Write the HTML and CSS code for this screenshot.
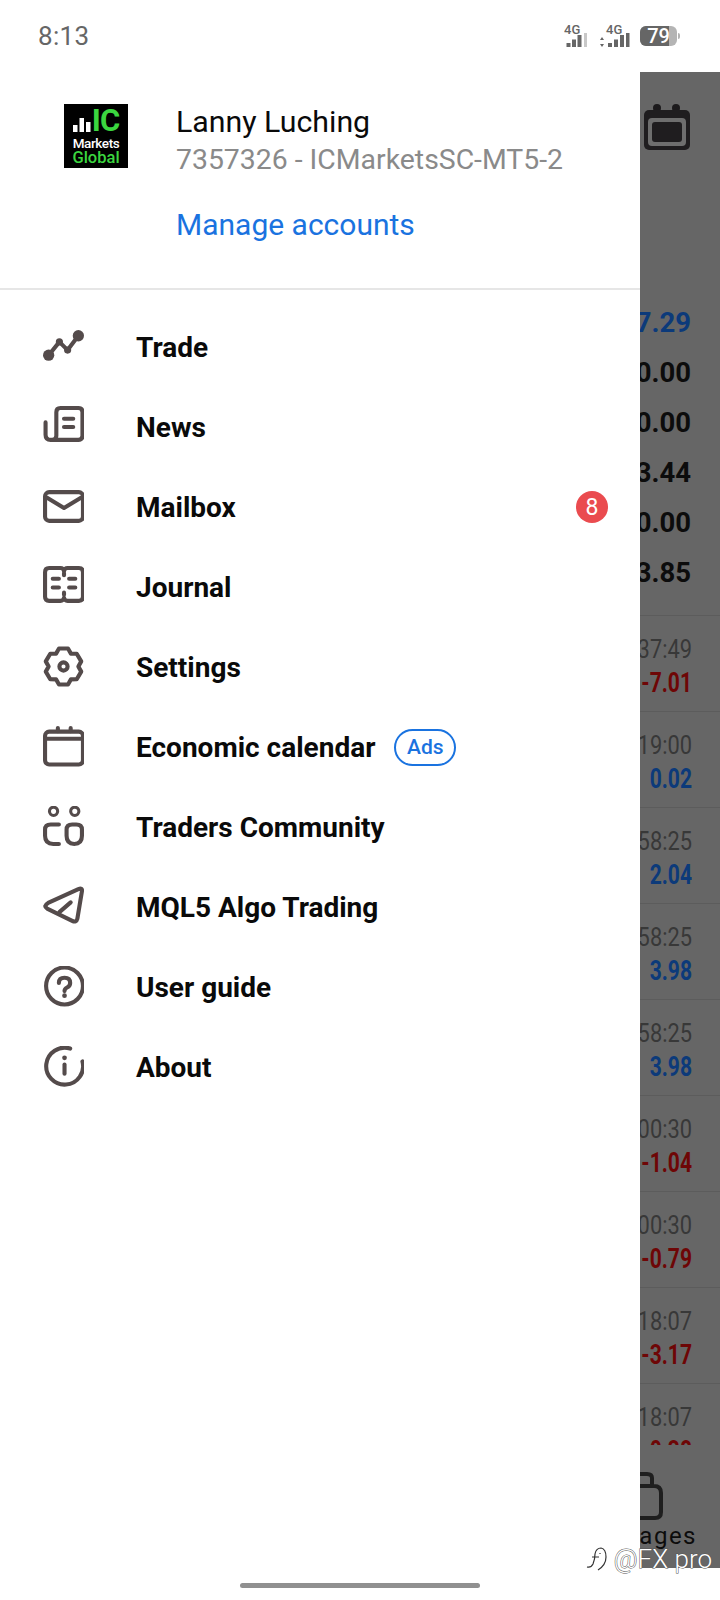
FILE: index.html
```html
<!DOCTYPE html>
<html lang="en">
<head>
<meta charset="utf-8">
<title>Accounts menu</title>
<link rel="stylesheet" href="styles.css">
</head>
<body>
<div class="screen">
  <header class="status">
    <span class="clock">8:13</span>
    <div class="status-icons">
      <svg class="signal" width="26" height="27" viewBox="0 -3 26 27">
        <text x="0" y="10" class="net">4G</text>
        <g fill="#666"><rect x="2.500" y="19" width="4" height="4"/><rect x="8" y="15.500" width="4" height="7.500"/><rect x="13.500" y="11" width="4" height="12"/></g>
        <rect x="20" y="9" width="3" height="14" fill="#c8c8c8"/>
      </svg>
      <svg class="signal" width="30" height="27" viewBox="0 -3 30 27">
        <text x="6" y="10" class="net">4G</text>
        <path d="M2 13l2 3H0zM2 23l-2-3h4z" fill="#666"/>
        <g fill="#666"><rect x="8" y="19" width="4" height="4"/><rect x="14" y="15.500" width="4" height="7.500"/><rect x="20" y="11" width="4" height="12"/><rect x="26" y="9" width="3.500" height="14"/></g>
      </svg>
      <div class="battery-wrap">
        <div class="battery"><div class="battery-level"></div><span class="battery-text">79</span></div>
        <div class="battery-nub"></div>
      </div>
    </div>
  </header>

  <div class="stage">
    <nav class="drawer">
      <section class="account">
        <div class="logo">
          <div class="logo-top">
            <svg class="logo-bars" width="19" height="14" viewBox="0 0 19 14"><g fill="#fff"><rect x="0" y="7" width="4.500" height="7"/><rect x="6.500" y="0" width="4.500" height="14"/><rect x="13" y="4" width="4.500" height="10"/></g></svg>
            <span class="logo-ic">IC</span>
          </div>
          <span class="logo-markets">Markets</span>
          <span class="logo-global">Global</span>
        </div>
        <div class="account-info">
          <div class="account-name">Lanny Luching</div>
          <div class="account-id">7357326 - ICMarketsSC-MT5-2</div>
          <a class="manage">Manage accounts</a>
        </div>
      </section>

      <ul class="menu">
        <li class="item">
          <svg class="icon" viewBox="0 0 40 40"><path d="M5.500 28.500L16 15.500l8 8L34.500 9.500" class="thin"/><circle cx="5.500" cy="28.500" r="5.500" class="solid"/><circle cx="16" cy="15.500" r="3.500" class="solid"/><circle cx="24" cy="23.500" r="3.500" class="solid"/><circle cx="34.500" cy="9.500" r="5.500" class="solid"/></svg>
          <span class="label">Trade</span>
        </li>
        <li class="item">
          <svg class="icon" viewBox="0 0 40 40"><path d="M2.500 16v12q0 5 5 5h27q4 0 4-4V6q0-4-4-4H17q-4 0-4 4v23q0 4-4 4" class="line"/><path d="M20.500 12.500h9M20.500 20.500h9" class="line"/></svg>
          <span class="label">News</span>
        </li>
        <li class="item">
          <svg class="icon" viewBox="0 0 40 40"><rect x="2" y="6" width="37" height="28" rx="4" class="line"/><path d="M4 11.500l16.500 10L37 11.500" class="line"/></svg>
          <span class="label">Mailbox</span>
          <span class="badge">8</span>
        </li>
        <li class="item">
          <svg class="icon" viewBox="0 0 40 40"><path d="M6 2h11q3 0 3.500 3 .5-3 3.500-3h11q4 0 4 4v24q0 4-4 4H24q-3 0-3.500-3-.5 3-3.500 3H6q-4 0-4-4V6q0-4 4-4z" class="line"/><path d="M20.500 7v2M20.500 26v2" class="line"/><path d="M9.500 12.500h6M25.500 12.500h6M9.500 21h6M25.500 21h6" class="line"/></svg>
          <span class="label">Journal</span>
        </li>
        <li class="item">
          <svg class="icon" viewBox="0 0 40 40"><path d="M15.600 2.500h8.800l2.850 4.940 5.650.06 4.400 7.500L34.500 20l2.800 5-4.400 7.500-5.650.06-2.850 4.940h-8.800l-2.850-4.940-5.650-.06L2.700 25l2.800-5-2.800-5 4.400-7.500 5.650-.06z" class="line"/><circle cx="20" cy="20" r="4" class="line"/></svg>
          <span class="label">Settings</span>
        </li>
        <li class="item">
          <svg class="icon" viewBox="0 0 40 40"><rect x="2" y="5.500" width="37" height="32" rx="4" class="line"/><path d="M3 12.500h35" class="line"/><path d="M14.500 2v3M27 2v3" class="line"/></svg>
          <span class="label">Economic calendar</span>
          <span class="ads">Ads</span>
        </li>
        <li class="item">
          <svg class="icon" viewBox="0 0 40 40"><circle cx="10.300" cy="5.200" r="4" class="thin-line"/><circle cx="31" cy="5.200" r="4" class="thin-line"/><path d="M15.500 18H7.500q-5.500 0-5.500 5v6q0 8 8 8h5.500" class="line"/><path d="M28.500 18h4q5.500 0 5.500 5v6q0 8-7.500 8T23 29v-6q0-5 5.500-5z" class="line"/></svg>
          <span class="label">Traders Community</span>
        </li>
        <li class="item">
          <svg class="icon" viewBox="0 0 40 40"><path d="M5 16.500L34.500 3q4-1.500 3.500 2L33.500 32q-1 4-5 2L4 22q-4-2.500 1-5.500z" class="line"/><path d="M16 25.500L27 16" class="line"/></svg>
          <span class="label">MQL5 Algo Trading</span>
        </li>
        <li class="item">
          <svg class="icon" viewBox="0 0 40 40"><circle cx="21" cy="19.500" r="18" class="line"/><path d="M15.500 16.500q0-5 5.500-5t5.500 5q0 3-3 4.500-2.500 1.300-2.500 3.500" class="line"/><circle cx="21" cy="29" r="2.300" class="solid"/></svg>
          <span class="label">User guide</span>
        </li>
        <li class="item">
          <svg class="icon" viewBox="0 0 40 40"><path d="M38.500 15A18 18 0 1 1 26.500 2.500" class="line"/><path d="M21 18v9" class="line"/><circle cx="21" cy="11.500" r="2.300" class="solid"/></svg>
          <span class="label">About</span>
        </li>
      </ul>
    </nav>

    <aside class="scrim">
      <svg class="toolbar-icon" viewBox="0 0 48 48"><circle cx="13" cy="4" r="4" fill="#1c1a1c"/><circle cx="32" cy="4" r="4" fill="#1c1a1c"/><rect x="0" y="6" width="46" height="40" rx="5" fill="#1f1d1f"/><rect x="4" y="14" width="38" height="28" rx="4" fill="#6e6e6e"/><rect x="8" y="18" width="30" height="20" rx="3" fill="#1f1d1f"/></svg>

      <div class="totals">
        <div class="total blue">7.29</div>
        <div class="total">0.00</div>
        <div class="total">0.00</div>
        <div class="total">3.44</div>
        <div class="total">0.00</div>
        <div class="total">3.85</div>
      </div>

      <div class="deal"><div class="deal-time">37:49</div><div class="deal-sum red">-7.01</div></div>
      <div class="deal"><div class="deal-time">19:00</div><div class="deal-sum blue">0.02</div></div>
      <div class="deal"><div class="deal-time">58:25</div><div class="deal-sum blue">2.04</div></div>
      <div class="deal"><div class="deal-time">58:25</div><div class="deal-sum blue">3.98</div></div>
      <div class="deal"><div class="deal-time">58:25</div><div class="deal-sum blue">3.98</div></div>
      <div class="deal"><div class="deal-time">00:30</div><div class="deal-sum red">-1.04</div></div>
      <div class="deal"><div class="deal-time">00:30</div><div class="deal-sum red">-0.79</div></div>
      <div class="deal"><div class="deal-time">18:07</div><div class="deal-sum red">-3.17</div></div>
      <div class="deal last"><div class="deal-time">18:07</div><div class="deal-sum red">-0.38</div></div>

      <div class="tabbar">
        <svg class="tab-icon" viewBox="0 0 56 48"><path d="M8 14h38q7 0 7 7v19q0 6-6 6H8M20 14V6q0-4 4-4h15q5 0 5 4v8" class="tab-line"/></svg>
        <span class="tab-label">Messages</span>
      </div>
    </aside>
  </div>

  <footer class="home"><div class="home-bar"></div></footer>

  <div class="watermark">
    <svg width="22" height="26" viewBox="0 0 22 26"><path d="M1 21q4 1 6-3 2-5 2-10 1-6 6-6 5 1 5 9 0 8-8 13" class="mark"/><path d="M6 11h7M14 7v1" class="mark"/></svg>
    <span class="watermark-text">@FX pro</span>
  </div>
</div>
</body>
</html>
```

FILE: styles.css
```css
* { box-sizing: border-box; }

html, body { margin: 0; padding: 0; }

body {
  width: 720px;
  height: 1600px;
  background: #fff;
  font-family: Roboto, "Liberation Sans", sans-serif;
  overflow: hidden;
}

.screen {
  position: relative;
  display: flex;
  flex-direction: column;
  width: 720px;
  height: 1600px;
}

/* Status bar */
.status {
  display: flex;
  align-items: center;
  justify-content: space-between;
  height: 72px;
  padding: 0 40px 0 38px;
  flex: none;
}

.clock {
  font-size: 26px;
  color: #666;
  letter-spacing: 0.3px;
}

.status-icons {
  display: flex;
  align-items: center;
  gap: 10px;
}

.signal {
  display: block;
  margin-bottom: 3px;
}

.net {
  font-family: Roboto, sans-serif;
  font-size: 13px;
  font-weight: 500;
  fill: #666;
}

.battery-wrap {
  display: flex;
  align-items: center;
  gap: 1px;
}

.battery {
  position: relative;
  width: 37px;
  height: 20px;
  border-radius: 6px;
  background: #b4b4b4;
  overflow: hidden;
  display: flex;
  align-items: center;
  justify-content: center;
}

.battery-level {
  position: absolute;
  inset: 0 8px 0 0;
  background: #666;
}

.battery-text {
  position: relative;
  color: #fff;
  font-size: 20px;
  font-weight: 500;
}

.battery-nub {
  width: 2px;
  height: 6px;
  border-radius: 0 2px 2px 0;
  background: #b4b4b4;
}

/* Main area */
.stage {
  display: flex;
  flex: 1;
  min-height: 0;
}

.drawer {
  width: 640px;
  flex: none;
  background: #fff;
}

.account {
  display: flex;
  height: 218px;
  padding: 32px 0 0 64px;
  border-bottom: 2px solid #e6e6e6;
}

.logo {
  display: flex;
  flex-direction: column;
  align-items: center;
  width: 64px;
  height: 64px;
  padding-top: 6px;
  background: #000;
  line-height: 1;
}

.logo-top {
  display: flex;
  align-items: flex-end;
  height: 22px;
}

.logo-bars { display: block; }

.logo-ic {
  color: #3bd63f;
  font-size: 31px;
  font-weight: 700;
  line-height: 22px;
  letter-spacing: -1px;
}

.logo-markets {
  margin-top: 4px;
  color: #fff;
  font-size: 13.500px;
  font-weight: 500;
  line-height: 14px;
  letter-spacing: -0.4px;
}

.logo-global {
  margin-top: 1px;
  color: #3bd63f;
  font-size: 16.500px;
  font-weight: 500;
  line-height: 14px;
}

.account-info {
  margin-left: 48px;
}

.account-name {
  font-size: 30.300px;
  line-height: 36px;
  color: #0a0a0a;
}

.account-id {
  margin-top: 1px;
  font-size: 28.400px;
  line-height: 38px;
  color: #8a8a8a;
}

.manage {
  display: block;
  margin-top: 27px;
  font-size: 30px;
  line-height: 38px;
  color: #1a73e0;
}

.menu {
  list-style: none;
  margin: 0;
  padding: 17px 0 0;
}

.item {
  display: flex;
  align-items: center;
  height: 80px;
  padding-left: 43px;
}

.icon {
  display: block;
  width: 41px;
  height: 41px;
  margin-bottom: 1px;
  flex: none;
}

.line {
  fill: none;
  stroke: #544b4b;
  stroke-width: 4;
  stroke-linecap: round;
  stroke-linejoin: round;
}

.thin {
  fill: none;
  stroke: #544b4b;
  stroke-width: 4;
  stroke-linejoin: round;
}

.thin-line {
  fill: none;
  stroke: #544b4b;
  stroke-width: 3;
}

.solid { fill: #544b4b; }

.label {
  margin-left: 52px;
  font-size: 28px;
  font-weight: 700;
  color: #0a0a0a;
  white-space: nowrap;
}

.badge {
  display: flex;
  align-items: center;
  justify-content: center;
  width: 32px;
  height: 32px;
  margin: 0 32px 0 auto;
  border-radius: 50%;
  background: #ea4b4f;
  color: #fff;
  font-size: 23px;
}

.ads {
  display: flex;
  align-items: center;
  justify-content: center;
  width: 62px;
  height: 37px;
  margin: 0 0 0 19px;
  border: 2px solid #1a73e0;
  border-radius: 19px;
  color: #1a73e0;
  font-size: 21px;
  font-weight: 500;
}

/* Dimmed page behind the drawer */
.scrim {
  position: relative;
  display: flex;
  flex-direction: column;
  width: 80px;
  flex: none;
  background: #666;
  overflow: hidden;
}

.toolbar-icon {
  display: block;
  width: 48px;
  height: 48px;
  margin: 32px 0 0 4px;
  flex: none;
}

.totals {
  margin-top: 146px;
  padding-right: 29px;
  flex: none;
  height: 317px;
}

.total {
  display: flex;
  justify-content: flex-end;
  height: 50px;
  font-size: 27.500px;
  font-weight: 700;
  line-height: 50px;
  color: #0c0c0c;
  white-space: nowrap;
}

.total.blue { color: #0c3a7a; }

.deal {
  height: 96px;
  padding: 14px 28px 0 0;
  border-top: 1px solid #5c5c5c;
  flex: none;
  white-space: nowrap;
}

/* The list uses a narrow face, so digits are squeezed from the right edge */
.deal-time,
.deal-sum {
  display: flex;
  justify-content: flex-end;
  transform-origin: right center;
}

.deal-time {
  font-size: 26px;
  line-height: 38px;
  color: #383838;
  transform: scaleX(0.84);
}

.deal-sum {
  font-size: 27px;
  font-weight: 700;
  line-height: 30px;
  transform: scaleX(0.78);
}

.deal-sum.red { color: #6e0606; }
.deal-sum.blue { color: #0c3a7a; }

.deal.last { height: 62px; overflow: hidden; }

.tabbar {
  position: relative;
  flex: 1;
  background: #666;
}

.tab-icon {
  position: absolute;
  left: -32px;
  top: 27px;
  width: 56px;
  height: 48px;
}

.tab-line {
  fill: none;
  stroke: #1f1f1f;
  stroke-width: 4;
  stroke-linecap: round;
}

.tab-label {
  position: absolute;
  right: 23px;
  bottom: 18px;
  font-size: 24px;
  line-height: 28px;
  letter-spacing: 1.500px;
  color: #0c0c0c;
  white-space: nowrap;
}

.home {
  display: flex;
  justify-content: center;
  align-items: center;
  height: 32px;
  flex: none;
}

.home-bar {
  width: 240px;
  height: 5px;
  margin-top: 2px;
  border-radius: 3px;
  background: #909090;
}

/* Repost mark over the corner */
.watermark {
  position: absolute;
  right: 8px;
  top: 1544px;
  display: flex;
  align-items: center;
  gap: 6px;
}

.watermark-text {
  color: #fff;
  font-size: 26px;
  font-weight: 300;
  line-height: 30px;
  -webkit-text-stroke: 1px #555;
  paint-order: stroke fill;
}

.mark {
  fill: none;
  stroke: #333;
  stroke-width: 1.200;
}
```
